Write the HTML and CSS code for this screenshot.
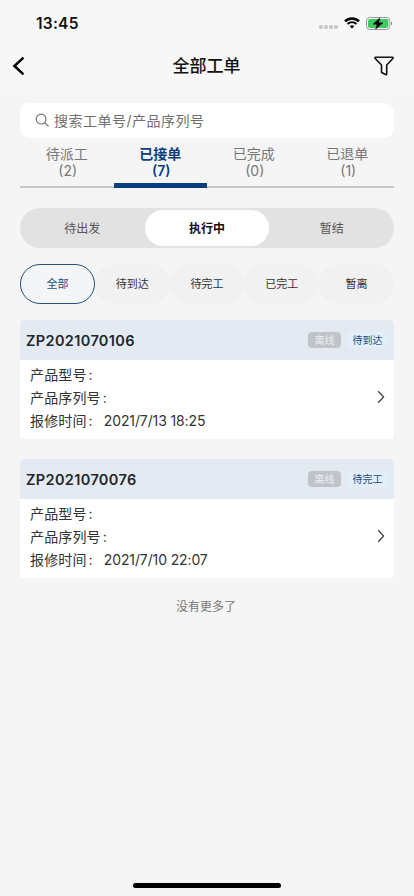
FILE: index.html
```html
<!DOCTYPE html>
<html lang="zh-CN">
<head>
<meta charset="utf-8">
<meta name="viewport" content="width=device-width, initial-scale=1">
<title>全部工单</title>
<link rel="stylesheet" href="styles.css">
</head>
<body>
<div class="screen">
  <header class="top">
    <div class="status">
      <span class="time">13:45</span>
      <div class="status-icons">
        <span class="dots"><i></i><i></i><i></i><i></i></span>
        <svg class="wifi" width="16" height="12" viewBox="0 0 16 12">
          <path d="M1 4.300C5 .5 11 .5 15 4.300" fill="none" stroke="#000" stroke-width="2.400"/>
          <path d="M3.500 7.100c2.600-2.400 6.400-2.400 9 0" fill="none" stroke="#000" stroke-width="2.100"/>
          <path d="M5.700 9.200c1.300-1.200 3.300-1.200 4.600 0L8 11.600z"/>
        </svg>
        <svg class="battery" width="27" height="13" viewBox="0 0 27 13">
          <rect x=".5" y=".5" width="23.400" height="12" rx="3.300" fill="#f6f6f6" stroke="#9b9b9b"/>
          <rect x="2" y="2" width="20.400" height="9" rx="1.800" fill="#3fcb63"/>
          <path d="M25 4.600v3.800c1.600-.5 1.600-3.300 0-3.800z" fill="#8a8a8a"/>
          <path d="M13.800.8 7 7.200h4L9.600 12.300 17 5.800h-4z" stroke="#000" stroke-width=".4"/>
        </svg>
      </div>
    </div>
    <nav class="navbar">
      <svg class="back" width="14" height="22" viewBox="0 0 14 22"><path d="M11.500 2.600 2.400 11l9.100 8.400" fill="none" stroke="#000" stroke-width="2.500"/></svg>
      <h1>全部工单</h1>
      <svg class="filter" width="20" height="20" viewBox="0 0 20 20"><path d="M1.600 1.200h16.800c.8 0 .9.800.5 1.300L12.700 9v8.700c0 .8-.6 1.100-1.200.8l-3.300-1.700c-.5-.2-.7-.6-.7-1.100V9L1.200 2.500c-.5-.5-.3-1.300.4-1.300z" fill="none" stroke="#111" stroke-width="1.600" stroke-linejoin="round"/></svg>
    </nav>
  </header>
  <main>
    <div class="search">
      <svg width="15" height="15" viewBox="0 0 15 15"><circle cx="6.100" cy="6.100" r="4.900" fill="none" stroke="#777" stroke-width="1.200"/><path d="m9.700 9.700 3.900 3.700" stroke="#777" stroke-width="1.300"/></svg>
      <span>搜索工单号/产品序列号</span>
    </div>
    <div class="tabs">
      <div class="tab">待派工<span>(2)</span></div>
      <div class="tab active">已接单<span>(7)</span></div>
      <div class="tab">已完成<span>(0)</span></div>
      <div class="tab">已退单<span>(1)</span></div>
    </div>
    <div class="segment">
      <div>待出发</div>
      <div class="on">执行中</div>
      <div>暂结</div>
    </div>
    <div class="chips">
      <div class="chip on">全部</div>
      <div class="chip">待到达</div>
      <div class="chip">待完工</div>
      <div class="chip">已完工</div>
      <div class="chip">暂离</div>
    </div>
    <article class="card">
      <div class="card-head"><h2>ZP2021070106</h2><span class="tag off">离线</span><span class="tag state">待到达</span></div>
      <div class="card-body">
        <div class="rows"><p>产品型号<b>:</b></p><p>产品序列号<b>:</b></p><p>报修时间<b>:</b><span class="date">2021/7/13 18:25</span></p></div>
        <svg width="8" height="14" viewBox="0 0 8 14"><path d="m1.200 1.300 5.400 5.700-5.400 5.700" fill="none" stroke="#444" stroke-width="1.300"/></svg>
      </div>
    </article>
    <article class="card">
      <div class="card-head"><h2>ZP2021070076</h2><span class="tag off">离线</span><span class="tag state">待完工</span></div>
      <div class="card-body">
        <div class="rows"><p>产品型号<b>:</b></p><p>产品序列号<b>:</b></p><p>报修时间<b>:</b><span class="date">2021/7/10 22:07</span></p></div>
        <svg width="8" height="14" viewBox="0 0 8 14"><path d="m1.200 1.300 5.400 5.700-5.400 5.700" fill="none" stroke="#444" stroke-width="1.300"/></svg>
      </div>
    </article>
    <p class="end">没有更多了</p>
  </main>
  <div class="home"></div>
</div>
</body>
</html>
```
FILE: styles.css
```css
* { box-sizing: border-box; margin: 0; padding: 0; }
body { background: #f5f5f5; font-family: Inter, "Noto Sans CJK SC", sans-serif; color: #222; }
svg { display: block; flex: none; }
.screen { height: 896px; display: flex; flex-direction: column; }
.top { height: 96px; background: #f7f7f7; }
.status { height: 46px; padding: 0 21px 0 36px; display: flex; justify-content: space-between; align-items: center; }
.time { font-size: 15.5px; font-weight: 600; letter-spacing: .25px; color: #111; }
.status-icons { display: flex; align-items: center; }
.dots { display: flex; gap: 1px; margin: 8px 6px 0 0; }
.dots i { width: 4px; height: 4px; border-radius: 1.5px; background: #c8c8c8; }
.battery { margin-left: 6px; }
.navbar { height: 40px; padding: 0 20px 0 12px; display: grid; grid-template-columns: 40px 1fr 32px; align-items: center; }
.navbar h1 { padding-right: 1px; font-size: 17px; line-height: 24px; font-weight: 500; text-align: center; color: #111; }
.filter { justify-self: end; }
main { flex: 1; padding: 7px 20px 0; }
.search { height: 35px; border-radius: 9px; background: #fff; display: flex; align-items: center; gap: 4px; padding-left: 15px; color: #707070; font-size: 14px; letter-spacing: .5px; }
.search span { padding-bottom: 2px; }
.tabs { display: grid; grid-template-columns: repeat(4, 1fr); height: 50px; }
.tab { padding-top: 7px; border-bottom: 2px solid #c6c8ca; text-align: center; font-size: 14px; line-height: 17px; color: #777; }
.tab span { display: block; padding-left: 2px; }
.tab.active { color: #0b3d82; font-weight: 600; border-bottom: 5px solid #0b3d82; }
.segment { display: grid; grid-template-columns: repeat(3, 1fr); height: 40px; margin-top: 20px; padding: 2px 0; border-radius: 20px; background: #e2e2e2; text-align: center; font-size: 12px; line-height: 38px; color: #555; }
.segment div { height: 36px; }
.segment .on { background: #fff; border-radius: 18px; color: #111; font-weight: 600; }
.chips { display: grid; grid-template-columns: repeat(5, 1fr); margin-top: 16px; }
.chip { height: 40px; line-height: 38px; border: 1px solid #f1f1f1; border-radius: 20px; background: #f1f1f1; text-align: center; font-size: 11px; color: #333; }
.chip.on { border-color: #24507f; color: #24507f; background: #f3f5f7; }
.card { height: 119px; margin-top: 16px; border-radius: 4px; overflow: hidden; background: #fff; }
.card + .card { margin-top: 20px; }
.card-head { height: 40px; padding: 0 6px; display: flex; align-items: center; background: #e4eaf2; }
.card-head h2 { flex: 1; font-size: 14.5px; font-weight: 600; letter-spacing: .36px; color: #23262b; }
.tag { height: 16px; line-height: 16px; border-radius: 4px; text-align: center; font-size: 10px; }
.off { width: 33px; background: #c1c3ca; color: #eef0f3; }
.state { width: 41px; margin-left: 6px; background: #e2effb; color: #1d4b7e; }
.card-body { height: 79px; padding: 3px 9px 0 10px; display: flex; justify-content: space-between; }
.card-body svg { margin-top: 27px; }
.rows p { height: 23px; line-height: 23px; font-size: 14px; letter-spacing: .15px; white-space: nowrap; color: #333; }
.rows b { font-weight: 400; margin-left: 2px; }
.date { margin-left: 11px; letter-spacing: -.12px; }
.end { margin-top: 20px; padding-right: 2px; text-align: center; font-size: 12px; line-height: 18px; color: #777; }
.home { width: 148px; height: 5px; margin: 0 auto 8px; border-radius: 3px; background: #000; }
```
